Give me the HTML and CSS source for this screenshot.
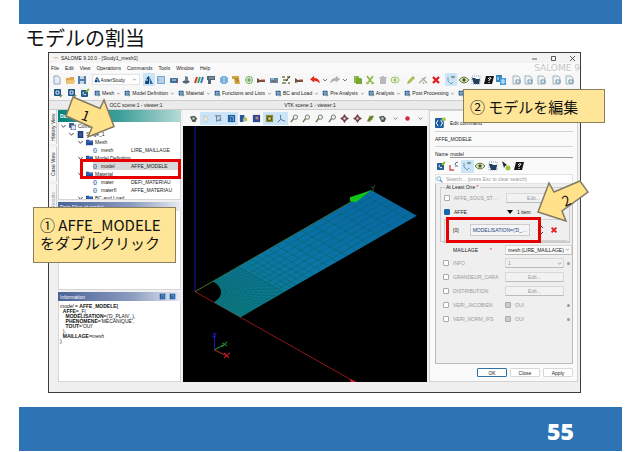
FILE: index.html
```html
<!DOCTYPE html>
<html lang="ja">
<head>
<meta charset="utf-8">
<title>モデルの割当</title>
<link rel="stylesheet" href="styles.css">
</head>
<body>
<svg class="defs" aria-hidden="true">
  <symbol id="doc" viewBox="0 0 10 10"><path d="M2 1h4l2 2v6H2z" fill="#e8eef6" stroke="#7f8fb0" stroke-width=".8"/></symbol>
  <symbol id="folder" viewBox="0 0 10 10"><path d="M1 3h3l1-1h4v6H1z" fill="#e2a54a"/><path d="M2 5h8l-1 4H1z" fill="#f0c47a"/></symbol>
  <symbol id="save" viewBox="0 0 10 10"><path d="M1 1h8v8H1z" fill="#4f7fa8"/><path d="M3 1h4v3H3zM3 6h4v3H3z" fill="#c9d8e4"/></symbol>
  <symbol id="aster" viewBox="0 0 10 10"><path d="M1 9c0-4 2-7 4-8v8z" fill="#12406e"/><path d="M5 1l4 8H6z" fill="#2a6ba8"/><circle cx="3" cy="5" r="1" fill="#9cc5e8"/></symbol>
  <symbol id="tag" viewBox="0 0 10 10"><rect x="1" y="1" width="7" height="7" rx="1" fill="#1f5488"/><path d="M3 3h3v3H3z" fill="none" stroke="#d5e6f5"/><path d="M7 9l2-2" stroke="#6a9a3c" stroke-width="1.4"/></symbol>
  <symbol id="edit" viewBox="0 0 10 10"><rect x="1" y="2" width="7" height="7" rx="1" fill="#1f5c8c"/><path d="M4 4q-1 0-1 1.500q1 2 3 1" stroke="#fff" fill="none"/><path d="M6 4l3-3" stroke="#8bbb3c" stroke-width="2"/></symbol>
  <symbol id="command" viewBox="0 0 10 10"><rect y="1" width="8" height="9" rx="1" fill="#1f5c9c"/><path d="M3 3q-1 0-1 1.500L1 5.500l1 1Q2 8 3 8M5 3q1 0 1 1.500l1 1-1 1Q6 8 5 8" stroke="#fff" fill="none" stroke-width=".9"/><circle cx="8" cy="2" r="1.800" fill="#a5cc4a"/></symbol>
  <symbol id="table" viewBox="0 0 10 10"><rect x="1" y="1" width="8" height="8" fill="#78a8cf"/><path d="M2 3h6M3 5h5M2 7h6" stroke="#f3f8fc"/></symbol>
  <symbol id="box" viewBox="0 0 10 10"><rect x="1" y="3" width="8" height="5" rx="1" fill="#3d6f9b"/><path d="M3 5h4" stroke="#dce8f0"/><path d="M7 7h2" stroke="#a83b3b"/></symbol>
  <symbol id="part" viewBox="0 0 10 10"><path d="M4 1l3 1v3l2 2-4 2-4-2 3-2z" fill="#6c7f90"/><path d="M2 7h6" stroke="#384858"/></symbol>
  <symbol id="bars" viewBox="0 0 10 10"><path d="M1 8l2-6" stroke="#cf3a32" stroke-width="2"/><path d="M4 8l2-6" stroke="#42a54c" stroke-width="2"/><path d="M7 8l2-6" stroke="#3278cc" stroke-width="2"/></symbol>
  <symbol id="flag" viewBox="0 0 10 10"><path d="M1 1h8v4H5v4H2V5H1z" fill="#526575"/><path d="M3 3h5" stroke="#a5b3bd"/></symbol>
  <symbol id="globe" viewBox="0 0 10 10"><circle cx="5" cy="5" r="4" fill="#4a93ce"/><path d="M1 5h8M5 1v8M2 3h6M2 7h6" stroke="#d8ebf8" stroke-width=".7"/></symbol>
  <symbol id="scroll" viewBox="0 0 10 10"><path d="M1 1h7v2l1 6H4L3 4H1z" fill="#cfa63e"/><path d="M4 4h3M5 6h3" stroke="#8d631e" stroke-width=".8"/></symbol>
  <symbol id="ring" viewBox="0 0 10 10"><circle cx="5" cy="5" r="3.500" fill="#e8f4df" stroke="#64ac5a"/><path d="M5 3v4M3 5h4" stroke="#4b8f42"/></symbol>
  <symbol id="beam" viewBox="0 0 10 10"><path d="M1 3l3 2h5v2H4L1 8z" fill="#6e5148"/><path d="M5 5h4" stroke="#d4442e"/></symbol>
  <symbol id="block" viewBox="0 0 10 10"><rect x="1" y="3" width="8" height="5" fill="#5b8aa6"/><path d="M3 6h4" stroke="#b2503f"/><path d="M2 4h3" stroke="#cfe0ea"/></symbol>
  <symbol id="dots" viewBox="0 0 10 10"><path d="M1 2h3M6 2h3M2 5h5M1 8h4M7 8h2" stroke="#79803d" stroke-width="1.600"/><path d="M5 6l4-5" stroke="#333"/></symbol>
  <symbol id="undo" viewBox="0 0 12 10"><path d="M0 4l5-4v2.500q6 0 7 6.500-3-3-7-3v2z" fill="#e62a1e"/></symbol>
  <symbol id="redo" viewBox="0 0 12 10"><path d="M12 4L7 0v2.500Q1 2.500 0 9q3-3 7-3v2z" fill="#aeb2b2"/></symbol>
  <symbol id="paste" viewBox="0 0 10 10"><path d="M1 1h5v7H1z" fill="#8fb84c"/><path d="M3 3h5l1 1v5H3z" fill="#77a832"/></symbol>
  <symbol id="cut" viewBox="0 0 10 10"><path d="M2 1l6 8M8 1L2 9" stroke="#8bb43e" stroke-width="1.600"/><path d="M1 8h3M6 8h3" stroke="#a5c46a" stroke-width="2"/></symbol>
  <symbol id="trash" viewBox="0 0 10 10"><path d="M2 3h6v6H2zM1 2h8v1H1zM4 1h2v1H4z" fill="#b9b9b9"/></symbol>
  <symbol id="plus" viewBox="0 0 10 10"><ellipse cx="5" cy="5" rx="4" ry="3" fill="none" stroke="#9fc468"/><path d="M5 3v4M3 5h4" stroke="#8bb547"/></symbol>
  <symbol id="pencil" viewBox="0 0 10 10"><path d="M1 9l1-3 5-5 2 2-5 5z" fill="#9cb944"/><path d="M3 7l4-4" stroke="#e5c85c"/></symbol>
  <symbol id="brush" viewBox="0 0 10 10"><path d="M1 8l7-6M4 3l5 5M5 7l1 2" stroke="#a9b29e" stroke-width="1.300"/></symbol>
  <symbol id="cross" viewBox="0 0 10 10"><path d="M2 2l6 6M8 2L2 8" stroke="#df1f1f" stroke-width="2.400"/></symbol>
  <symbol id="axes" viewBox="0 0 10 10"><path d="M2 2v4l3 3 2-2" fill="none" stroke="#6f9ab8"/><path d="M5 2q2-2 4 0-2 2-4 0" fill="#9dbb9b" stroke="#58807c" stroke-width=".6"/></symbol>
  <symbol id="eye" viewBox="0 0 10 10"><path d="M0 5q5-6 10 0-5 6-10 0" fill="#dfe9c5" stroke="#63793c"/><circle cx="5" cy="5" r="1.700" fill="#435b34"/></symbol>
  <symbol id="select" viewBox="0 0 10 10"><path d="M1 1h8v8H1z" fill="none" stroke="#87a4bd" stroke-dasharray="1 1"/><path d="M1 3h3l1 1h4L8 9H3z" fill="#223f62"/></symbol>
  <symbol id="help" viewBox="0 0 10 10"><path d="M2 1h8L8 9H0z" fill="#151515"/><path d="M4 4q1-2 3-1 0 1-2 2v1M5 7v1" stroke="#fff" fill="none"/></symbol>
  <symbol id="lang" viewBox="0 0 10 10"><rect width="6" height="7" fill="#3486bf"/><rect x="4" y="3" width="6" height="7" fill="#4a9ee0"/><path d="M2 2v3M6 5h2v3H6z" stroke="#e5f2fb" fill="none"/></symbol>
  <symbol id="sheet" viewBox="0 0 10 10"><path d="M1 1h5l2 2v6H1z" fill="#edf2f5" stroke="#8da3b2" stroke-width=".8"/><path d="M4 5h4v3H4z" fill="none" stroke="#7696ac"/></symbol>
  <symbol id="cam" viewBox="0 0 10 10"><path d="M1 3l5-1 3 3-2 4H4z" fill="#4d5552"/><circle cx="5" cy="5" r="1.500" fill="#b9c8b6"/></symbol>
  <symbol id="hand" viewBox="0 0 10 10"><path d="M3 2l4 1 1 4-2 2-3-2z" fill="#e9e6dc" stroke="#a6b5ae" stroke-width=".6"/></symbol>
  <symbol id="poly" viewBox="0 0 10 10"><path d="M1 2h7M3 2v6l4-2V3" fill="none" stroke="#506e80"/><circle cx="7" cy="7" r="1.200" fill="#6f8e9e"/></symbol>
  <symbol id="blue" viewBox="0 0 10 10"><rect x="1" y="1" width="8" height="8" fill="#1e5b9d"/><path d="M3 3h4v5M4 5v3" stroke="#86b7df" fill="none"/></symbol>
  <symbol id="quad" viewBox="0 0 10 10"><path d="M1 1h5v4H1zM1 5h4v4H1z" fill="#28579c"/><path d="M5 4h4v4H5z" fill="#b3c254"/></symbol>
  <symbol id="mix" viewBox="0 0 10 10"><rect x="1" y="1" width="8" height="8" fill="#314b92"/><path d="M4 3h3v3H4z" fill="#c07f8c"/></symbol>
  <symbol id="gold" viewBox="0 0 10 10"><rect x="1" y="1" width="8" height="8" fill="#8c8c35"/><path d="M3 3h4v4H3z" fill="#d8cb58" stroke="#3c4520"/></symbol>
  <symbol id="trihedron" viewBox="0 0 10 10"><path d="M4 1v5l5 2M4 6L1 9" fill="none" stroke="#507188"/></symbol>
  <symbol id="lens" viewBox="0 0 10 10"><circle cx="6" cy="3.500" r="2.400" fill="#eaf2ef" stroke="#65736a"/><path d="M4 5L1 9" stroke="#6e7750" stroke-width="1.500"/></symbol>
  <symbol id="find" viewBox="0 0 10 10"><circle cx="4" cy="4" r="3" fill="#eaf4fb" stroke="#5a9cc8"/><path d="M6 6l3 3" stroke="#3c7fb0" stroke-width="1.500"/></symbol>
  <symbol id="pan" viewBox="0 0 10 10"><path d="M5 0l2 3 3 2-3 2-2 3-2-3-3-2 3-2z" fill="#703f46"/><circle cx="5" cy="5" r="1.300" fill="#e0d2d2"/></symbol>
  <symbol id="rotate" viewBox="0 0 10 10"><path d="M1 8l3-6 5 0-2 4-3 3z" fill="#83963b"/><path d="M3 7l4-4" stroke="#38491e"/></symbol>
  <symbol id="dot" viewBox="0 0 10 10"><circle cx="5" cy="5" r="2.500" fill="#cf2d3c"/></symbol>
  <symbol id="caret" viewBox="0 0 10 10"><path d="M3 4l2 2 2-2" fill="none" stroke="#777"/></symbol>
  <symbol id="chev" viewBox="0 0 10 10"><path d="M2 3l3 3 3-3" fill="none" stroke="#333" stroke-width="1.400"/></symbol>
  <symbol id="tree-folder" viewBox="0 0 10 10"><path d="M0 1h4l1 1h5v7H0z" fill="#204f9a"/><path d="M1 4h8" stroke="#5d8bd0"/></symbol>
  <symbol id="stage" viewBox="0 0 10 10"><path d="M1 0h8v10H1z" fill="#1c3d79"/><path d="M3 3h4M3 5h4M3 7h4" stroke="#6f8cc0" stroke-width=".7"/></symbol>
  <symbol id="case" viewBox="0 0 10 10"><path d="M0 0h7v7H0z" fill="#47618b"/><path d="M3 3h7v7H3z" fill="#dbe5f5" stroke="#29466f"/></symbol>
  <symbol id="pick" viewBox="0 0 10 10"><path d="M1 0l5 4-2 1-1 2z" fill="#222"/><circle cx="7" cy="7" r="2.500" fill="#9fc43d"/></symbol>
  <symbol id="vector" viewBox="0 0 10 10"><path d="M1 4v5h4" fill="none" stroke="#d24a4a" stroke-width="1.400"/><path d="M6 4q0-3 3-3M6 5h3" fill="none" stroke="#5a6a8a"/></symbol>
</svg>

<main class="slide">
  <div class="slide-top"></div>
  <h1 class="slide-title">モデルの割当</h1>

  <section class="window" aria-label="SALOME">
    <header class="titlebar">
      <span class="app-mark">⌤</span><span class="grow">SALOME 9.10.0 - [Study1_mesh1]</span>
      <span class="win-btns"><svg viewBox="0 0 5 5"><path d="M0 3h5"/></svg><svg viewBox="0 0 5 5"><path d="M.5 .5h4v4h-4z"/></svg><svg viewBox="0 0 5 5"><path d="M0 0l5 5M5 0L0 5"/></svg></span>
    </header>
    <nav class="menubar">
      <a href="#">File</a><a href="#">Edit</a><a href="#">View</a><a href="#">Operations</a><a href="#">Commands</a><a href="#">Tools</a><a href="#">Window</a><a href="#">Help</a>
      <span class="brand">SALOME 9</span>
    </nav>
    <div class="toolbar" id="main-tools">
      <span class="tools" data-icons="doc folder save"></span>
      <label class="combo"><svg class="mini"><use href="#aster"/></svg><select aria-label="Module"><option>AsterStudy</option></select><svg class="mini"><use href="#caret"/></svg></label>
      <span class="tools" data-icons="aster! table box part bars flag globe scroll ring beam block dots beam"></span>
      <span class="tools history" data-icons="undo caret redo caret"></span>
      <span class="tools" data-icons="paste cut trash plus"></span>
      <span class="tools" data-icons="pencil brush cross"></span>
      <span class="tools" data-icons="axes! eye select help lang"></span>
      <span class="tools" data-icons="sheet sheet sheet"></span>
      <span class="tools" data-icons="sheet sheet"></span>
    </div>
    <div class="toolbar categories">
      <span class="tools" data-icons="tag tag edit"></span>
      <button class="cat"><svg class="mini"><use href="#tag"/></svg>Mesh<svg class="mini"><use href="#caret"/></svg></button>
      <button class="cat"><svg class="mini"><use href="#tag"/></svg>Model Definition<svg class="mini"><use href="#caret"/></svg></button>
      <button class="cat"><svg class="mini"><use href="#tag"/></svg>Material<svg class="mini"><use href="#caret"/></svg></button>
      <button class="cat"><svg class="mini"><use href="#tag"/></svg>Functions and Lists<svg class="mini"><use href="#caret"/></svg></button>
      <button class="cat"><svg class="mini"><use href="#tag"/></svg>BC and Load<svg class="mini"><use href="#caret"/></svg></button>
      <button class="cat"><svg class="mini"><use href="#tag"/></svg>Pre Analysis<svg class="mini"><use href="#caret"/></svg></button>
      <button class="cat"><svg class="mini"><use href="#tag"/></svg>Analysis<svg class="mini"><use href="#caret"/></svg></button>
      <button class="cat"><svg class="mini"><use href="#tag"/></svg>Post Processing<svg class="mini"><use href="#caret"/></svg></button>
      <button class="cat" aria-label="More"><svg class="mini"><use href="#tag"/></svg></button>
    </div>
    <div class="scenes"><span>OCC scene:1 - viewer:1</span><span>VTK scene:1 - viewer:1</span></div>

    <div class="work">
      <div class="side-tabs"><button>History View</button><button>Case View</button><button class="off">Results</button></div>
      <div class="left">
        <section class="dock data">
          <h2 class="dock-title teal">Data Settings</h2>
          <div class="tree">
            <div class="node l0"><svg><use href="#chev"/></svg><svg class="ic"><use href="#case"/></svg>CurrentCase</div>
            <div class="node l1"><svg><use href="#chev"/></svg><svg class="ic"><use href="#stage"/></svg>Stage_1</div>
            <div class="node l2"><svg><use href="#chev"/></svg><svg class="ic"><use href="#tree-folder"/></svg>Mesh</div>
            <div class="node l3"><b>{}</b><span>mesh</span><span>LIRE_MAILLAGE</span></div>
            <div class="node l2"><svg><use href="#chev"/></svg><svg class="ic"><use href="#tree-folder"/></svg>Model Definition</div>
            <div class="node l3 selected"><b>{}</b><span>model</span><span>AFFE_MODELE</span></div>
            <div class="node l2"><svg><use href="#chev"/></svg><svg class="ic"><use href="#tree-folder"/></svg>Material</div>
            <div class="node l3"><b>{}</b><span>mater</span><span>DEFI_MATERIAU</span></div>
            <div class="node l3"><b>{}</b><span>materfl</span><span>AFFE_MATERIAU</span></div>
            <div class="node l2"><svg><use href="#chev"/></svg><svg class="ic"><use href="#tree-folder"/></svg>BC and Load</div>
          </div>
        </section>
        <section class="dock files">
          <h2 class="dock-title">Data Files at model</h2>
          <div class="dock-body"></div>
        </section>
        <section class="dock info">
          <h2 class="dock-title"><span class="grow">Information</span><svg class="mini"><use href="#blue"/></svg><svg class="mini"><use href="#blue"/></svg></h2>
          <pre class="dock-body"><i>model</i> = <b>AFFE_MODELE(</b>
  <b>AFFE=</b>_F(
    <b>MODELISATION=</b>('D_PLAN', ),
    <b>PHENOMENE=</b>'MECANIQUE',
    <b>TOUT=</b>'OUI'
  ),
  <b>MAILLAGE=</b><i>mesh</i>
)</pre>
        </section>
      </div>
      <div class="viewer">
        <div class="toolbar view-tools"><span class="tools" data-icons="cam hand! poly! blue! quad mix gold! trihedron! lens lens lens lens pan pan rotate cam caret dot caret"></span></div>
        <svg class="scene" viewBox="183 126 244 255" preserveAspectRatio="none" role="img" aria-label="VTK scene">
          <defs><linearGradient id="plate" x1="0" y1="1" x2=".6" y2="0"><stop offset="0" stop-color="#0b8088"/><stop offset=".5" stop-color="#0a76a6"/><stop offset="1" stop-color="#0869a3"/></linearGradient></defs>
          <path d="M195 126V291" stroke="#10106e" stroke-width="1.500"/>
          <path d="M195 291L355 381" stroke="#b01c20" stroke-width=".8"/>
          <path d="M195 291L371 190" stroke="#5e8c22" stroke-width=".8"/>
          <path id="body" fill="url(#plate)"/>
          <path id="grid" fill="none" stroke="#0d5a52" stroke-width=".4"/>
          <path d="M350 197l21-7-15 12-6-1z" fill="#12c413"/>
          <path d="M371 186l2 2 2-3M373 188v3" stroke="#4b7b4b" fill="none" stroke-width=".7"/>
          <path d="M350 378l9 4h-8z" fill="#e0202c"/>
          <path d="M214.500 349v-13M213 333h3l-3 3h3" stroke="#1a1ac4" fill="none"/>
          <path d="M214.500 349l9-5" stroke="#2aa52a"/><path d="M222 342l5 3M227 341l-5 5" stroke="#238d33"/>
          <path d="M214.500 349l10 5" stroke="#c42a20"/><path d="M224 352l5 5M230 352l-6 5" stroke="#d51a2e" stroke-width="1.200"/>
        </svg>
      </div>
      <form class="editor">
        <div class="edit-head"><svg><use href="#command"/></svg>Edit command</div>
        <div class="command">AFFE_MODELE</div>
        <label class="name-row">Name <input value="model"></label>
        <div class="edit-tools"><span class="tools" data-icons="edit vector axes! eye select pick help"></span></div>
        <label class="search"><svg><use href="#find"/></svg><input aria-label="Search" placeholder="Search... (press Esc to clear search)"></label>
        <div class="params">
          <fieldset>
            <legend>At Least One <em>*</em></legend>
            <div class="row off"><label><input type="checkbox">AFFE_SOUS_ST…</label><button type="button" class="val">Edit...</button></div>
            <div class="row"><label><input type="checkbox" checked>AFFE</label><span class="count"><svg viewBox="0 0 6 4"><path d="M0 0h6L3 4z"/></svg>1 item</span></div>
            <div class="item"><span>[0]</span><button type="button">MODELISATION=('D_…</button><svg class="updown" viewBox="0 0 6 10"><path d="M1 3l2-2 2 2M1 7l2 2 2-2"/></svg><svg class="del"><use href="#cross"/></svg></div>
          </fieldset>
          <div class="row req"><label for="mail">MAILLAGE</label><em>*</em><span class="val pick"><select id="mail"><option>mesh (LIRE_MAILLAGE)</option></select><svg class="mini"><use href="#caret"/></svg></span></div>
          <div class="row off"><label><input type="checkbox">INFO</label><span class="val pick"><select aria-label="INFO value"><option>1</option></select><svg class="mini"><use href="#caret"/></svg></span><i class="mark"></i></div>
          <div class="row off"><label><input type="checkbox">GRANDEUR_CARA</label><button type="button" class="val">Edit...</button></div>
          <div class="row off"><label><input type="checkbox">DISTRIBUTION</label><button type="button" class="val">Edit...</button></div>
          <div class="row off"><label><input type="checkbox">VERI_JACOBIEN</label><label class="yes"><input type="checkbox">OUI</label><i class="mark"></i></div>
          <div class="row off"><label><input type="checkbox">VERI_NORM_IFS</label><label class="yes"><input type="checkbox">OUI</label><i class="mark"></i></div>
        </div>
        <div class="actions"><button type="button" class="primary">OK</button><button type="button">Close</button><button type="button">Apply</button></div>
      </form>
    </div>
  </section>

  <footer class="slide-foot">55</footer>

  <div class="frame frame-model"></div>
  <div class="frame frame-affe"></div>
  <svg class="arrow arrow-one" viewBox="64 94 54 46" aria-hidden="true"><path d="M73 97L100 108.500L104 100L114 126.500L88 137L92 127.500L66 116z"/></svg>
  <span class="arrow-num num-one">1</span>
  <svg class="arrow arrow-two" viewBox="536 179 56 44" aria-hidden="true"><path d="M538 212L549 183L554 192L580 181L588 192L562 211L566 221z"/></svg>
  <span class="arrow-num num-two">2</span>
  <p class="callout call-one">① AFFE_MODELE<br>をダブルクリック</p>
  <p class="callout call-two">② モデルを編集</p>
</main>
<script src="app.js"></script>
</body>
</html>
```

FILE: styles.css
```css
* { box-sizing: border-box; }
body { margin: 0; background: #fff; color: #222; font: 5px/8px "Liberation Sans", "Noto Sans CJK JP", sans-serif; }
button, input, select { font: inherit; color: inherit; margin: 0; padding: 0; border: 0; background: none; appearance: none; border-radius: 0; min-width: 0; }
a { color: inherit; text-decoration: none; }
em { color: #d22; font-style: normal; }
svg { display: block; flex: none; }
.defs { position: absolute; width: 0; height: 0; }
.grow { flex: 1; }
.mini { width: 7px; height: 7px; }

.slide { position: relative; display: flex; flex-direction: column; min-height: 100vh; padding: 0 18px 1px 19px; }
.slide-top, .slide-foot { background: #2e74b5; }
.slide-top { height: 24px; }
.slide-title { margin: 0 0 0 6px; font: 20px/28px "Noto Sans CJK JP", sans-serif; color: #111; }
.slide-foot { display: flex; align-items: center; justify-content: flex-end; height: 44px; padding: 4px 48px 0 0; color: #fff; font: 900 23px/24px "Noto Sans", sans-serif; }

.window { display: flex; flex-direction: column; flex: 1; margin: 0 41px 14px 29px; border: 1px solid #3c3c3c; background: #f0f0f0; padding-bottom: 10px; }
.titlebar { display: flex; align-items: center; gap: 2px; height: 10px; padding: 0 5px 0 4px; background: #f3f3f3; }
.app-mark { color: #a08a50; }
.win-btns { display: flex; gap: 14px; }
.win-btns svg { width: 5px; height: 5px; fill: none; stroke: #333; stroke-width: .8; }
.menubar { display: flex; align-items: center; gap: 6px; height: 10px; padding-left: 2px; background: #fafafa; }
.brand { margin-left: auto; color: #c6c6c6; font: 9px/10px "DejaVu Sans", sans-serif; }
.toolbar { display: flex; align-items: center; gap: 3px; height: 13px; padding: 0 4px 0 2px; background: #f7f7f7; }
.tools { display: flex; flex: var(--n) 1 0; }
.tools.history { flex-grow: 3; }
.tool { display: flex; flex: 1; align-items: center; justify-content: center; height: 13px; }
.history .tool:nth-child(odd) { flex: 2; }
.tool svg { width: 10px; height: 10px; }
.tool.on { background: #cce4f7; }
.combo { display: flex; align-items: center; width: 48px; border: 1px solid #e4e4e4; background: #fff; height: 11px; padding: 0 1px; }
.combo select { flex: 1; }
.toolbar.categories { gap: 2px; height: 15px; padding-right: 0; overflow: hidden; border-bottom: 1px solid #ccc; }
.categories .tools { flex: none; width: 41px; }
.cat { display: flex; flex: none; align-items: center; gap: 1px; height: 10px; white-space: nowrap; color: #222; }
.scenes { display: grid; grid-template-columns: 174px 174px; height: 9px; text-align: center; background: #ebebeb; border-bottom: 1px solid #ccc; }

.work { display: grid; grid-template-columns: 9px 125px 1fr 149px; flex: 1; padding: 0 2px 0 0; }
.side-tabs { display: flex; flex-direction: column; gap: 3px; }
.side-tabs button { writing-mode: vertical-rl; transform: rotate(180deg); width: 8px; height: 34px; background: #f7f7f7; border-left: 1px solid #d0d0d0; }
.side-tabs .off { color: #999; }
.left { display: flex; flex-direction: column; gap: 2px; padding-right: 2px; }
.dock { display: flex; flex-direction: column; }
.dock-title { display: flex; align-items: center; gap: 3px; height: 9px; margin: 0; padding: 0 5px 0 2px; color: #fff; font: 5px/8px "Liberation Sans", sans-serif; background: linear-gradient(90deg, #4a6296, #8b9cc0 60%, #e8ebf2); }
.dock-title.teal { height: 12px; font-weight: bold; background: linear-gradient(90deg, #07847c, #3c9f98 50%, #b8dad7); }
.dock-body { flex: 1; margin: 0; background: #fff; border: 1px solid #d5d5d5; border-top: 0; }
.tree { height: 78px; overflow: hidden; background: #fff; border: 1px solid #d5d5d5; border-top: 0; }
.node { display: flex; align-items: center; gap: 2px; height: 8px; white-space: nowrap; }
.node svg { width: 7px; height: 7px; }
.l0 { padding-left: 1px; } .l1 { padding-left: 9px; } .l2 { padding-left: 18px; }
.l3 { display: grid; grid-template-columns: 8px 30px 1fr; margin-left: 34px; gap: 0; }
.l3 b { color: #2e5fae; }
.selected { background: #d9d9d9; }
.files { height: 88px; }
.info { flex: 1; }
.info pre { padding: 3px 1px; color: #111; font: 5px/5px "Liberation Sans", sans-serif; }

.viewer { display: flex; flex-direction: column; min-width: 0; padding-right: 2px; }
.toolbar.view-tools { height: 16px; padding: 0 0 0 4px; }
.view-tools .tool svg { width: 9px; height: 9px; }
.scene { flex: 1; width: 100%; min-height: 0; background: #000; }

.editor { display: flex; flex-direction: column; min-width: 0; padding: 3px 4px 0 5px; background: #fafafa; border: 1px solid #d4d4d4; }
.edit-head { display: flex; align-items: center; gap: 4px; height: 18px; border-bottom: 1px solid #d4d4d4; }
.edit-head svg { width: 11px; height: 11px; }
.command { height: 15px; line-height: 15px; border-bottom: 1px solid #d4d4d4; }
.name-row { display: flex; gap: 2px; margin-top: 3px; }
.name-row input { flex: 1; height: 8px; border-bottom: 1px solid #999; }
.edit-tools { display: flex; width: 90px; height: 16px; align-items: center; }
.search { display: flex; align-items: center; gap: 3px; height: 10px; border: 1px solid #e4e4e4; background: #fff; }
.search svg { width: 7px; height: 7px; }
.search input { flex: 1; }
.search input::placeholder { color: #999; opacity: 1; }
.params { flex: 1; padding: 0 2px 0 7px; background: #efefef; border: 1px solid #bbb; border-top: 0; }
fieldset { min-width: 0; margin: 0 0 0 -3px; padding: 0 2px 0 3px; border: 1px solid #ccc; }
legend { margin-left: 1px; padding: 0 1px; line-height: 7px; }
.row { display: grid; grid-template-columns: 62px 1fr 3px; align-items: center; height: 14px; }
.row > .val { margin-right: 3px; }
.row label { display: flex; align-items: center; gap: 4px; white-space: nowrap; }
.row.off { color: #999; }
input[type="checkbox"] { width: 6px; height: 6px; border: 1px solid #aaa; border-radius: 1px; background: #fff; }
input[type="checkbox"]:checked { background: #1568b0; border-color: #1568b0; }
.yes input[type="checkbox"] { background: #ccc; }
.mark { width: 3px; height: 3px; border-radius: 50%; background: #999; }
.val { height: 10px; border: 1px solid #d8d8d8; border-bottom-color: #bbb; background: #f2f2f2; }
.pick { display: flex; align-items: center; background: #fafafa; padding-left: 2px; }
.pick select { flex: 1; }
.off .pick { background: #f0f0f0; }
.count { display: flex; align-items: center; gap: 4px; padding-left: 1px; }
.count svg { width: 6px; height: 4px; }
.item { display: flex; align-items: center; height: 22px; padding: 0 9px 0 8px; border: 1px solid #d2d2d2; border-right: 0; }
.item span { width: 17px; }
.item button { flex: 1; height: 12px; color: #223a7c; border: 1px solid #ccc; background: #f5f5f5; text-align: right; padding-right: 2px; white-space: nowrap; }
.updown { width: 6px; height: 10px; margin: 0 6px 0 8px; fill: none; stroke: #444; }
.del { width: 8px; height: 8px; }
.row.req { grid-template-columns: 47px 15px 1fr 3px; border-top: 1px solid #ccc; }
.req label { padding-left: 10px; }
.actions { display: flex; justify-content: flex-end; gap: 3px; padding: 4px 0; }
.actions button { width: 30px; height: 9px; background: #fff; border: 1px solid #d8d8d8; border-radius: 1px; }
.actions .primary { border-color: #2d73a8; }

.frame { position: absolute; border: 3px solid #e60000; }
.frame-model { left: 80px; top: 159px; width: 101px; height: 20px; }
.frame-affe { left: 446px; top: 217px; width: 95px; height: 26px; }
.arrow { position: absolute; fill: #ffe28a; stroke: #857b63; stroke-width: 1.5; }
.arrow-one { left: 64px; top: 94px; width: 54px; height: 46px; }
.arrow-two { left: 536px; top: 179px; width: 56px; height: 44px; }
.arrow-num { position: absolute; font: 14px/14px "Noto Sans CJK JP", sans-serif; color: #111; }
.num-one { left: 82px; top: 108px; transform: rotate(20deg); }
.num-two { left: 562px; top: 193px; transform: rotate(-25deg); }
.callout { position: absolute; margin: 0; padding: 8px 6px; font: 15px/18px "Noto Sans CJK JP", sans-serif; color: #111; background: #ffe597; border: 1px solid #8b7f5c; white-space: nowrap; }
.call-one { left: 33px; top: 207px; width: 143px; height: 56px; }
.call-two { left: 463px; top: 89px; width: 142px; height: 34px; }
```

FILE: app.js
```js
// Fill each tool group from its list of icon names; "!" marks a pressed tool.
document.querySelectorAll('.tools').forEach(function (group) {
  var names = group.dataset.icons.split(' ');
  group.style.setProperty('--n', names.length);
  names.forEach(function (name) {
    var id = name.replace('!', '');
    var tool = document.createElement('button');
    tool.type = 'button';
    tool.className = 'tool' + (name === id ? '' : ' on');
    tool.setAttribute('aria-label', id);
    tool.innerHTML = '<svg><use href="#' + id + '"/></svg>';
    group.appendChild(tool);
  });
});

// Plate with a quarter hole: lengths are in hole radii, projected on the scene.
var W = 2.4, L = 9.8;
function at(x, y) {
  return (195 + 18.9 * x + 18 * y).toFixed(1) + ' ' + (291 + 10.6 * x - 10.3 * y).toFixed(1);
}
function line(points) {
  return 'M' + points.map(function (p) { return at(p[0], p[1]); }).join('L');
}
function ring(t) {
  var pts = [];
  for (var i = 0; i <= 20; i++) {
    var a = i / 20 * Math.PI / 2, c = Math.cos(a), s = Math.sin(a);
    var far = W / Math.max(c, s), r = 1 + (far - 1) * t;
    pts.push([r * c, r * s]);
  }
  return pts;
}
document.getElementById('body').setAttribute('d', line(ring(0).concat([[0, L], [W, L], [W, 0]])) + 'Z');
var d = '';
for (var k = 0; k <= 12; k++) d += line(ring(k / 12));
for (var i = 0; i <= 20; i++) d += line([ring(0)[i], ring(1)[i]]);
for (var j = 1; j < 8; j++) d += line([[W * j / 8, W], [W * j / 8, L]]);
for (var y = W, step = 0.22; y < L; step *= 1.1) { d += line([[0, y], [W, y]]); y += step; }
document.getElementById('grid').setAttribute('d', d);
```
